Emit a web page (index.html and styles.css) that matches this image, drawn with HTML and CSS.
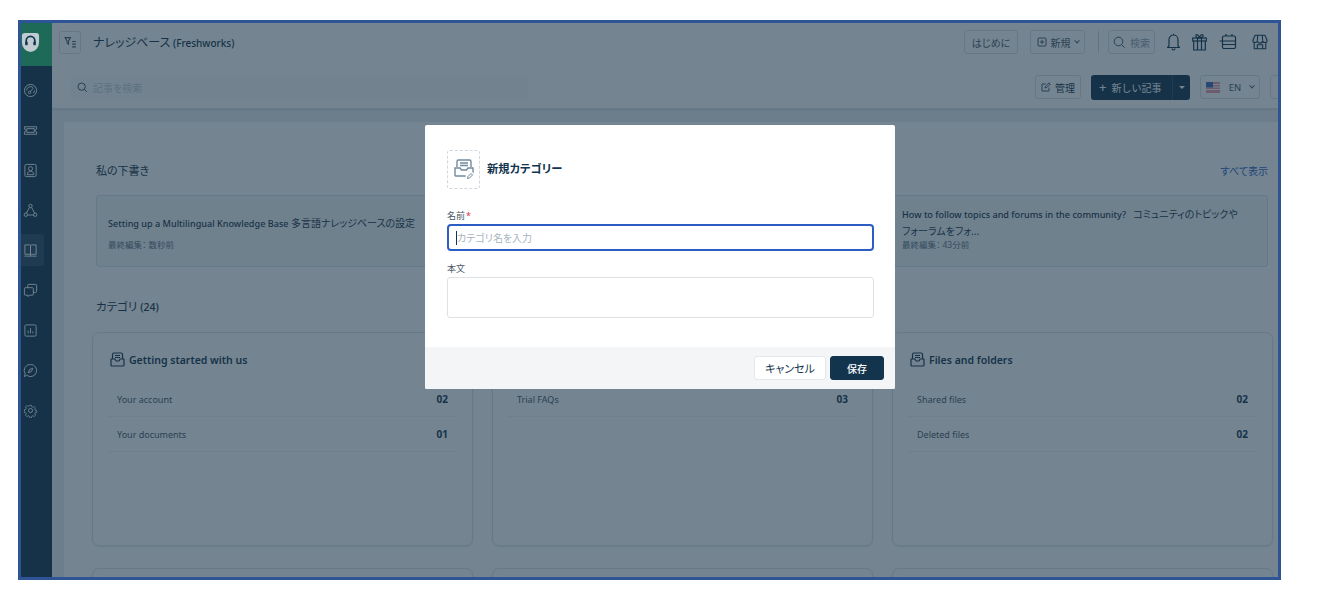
FILE: index.html
```html
<!DOCTYPE html>
<html lang="ja">
<head>
<meta charset="utf-8">
<title>ナレッジベース</title>
<link rel="stylesheet" href="styles.css">
</head>
<body>
<div class="frame">
  <div class="app">
    <nav class="sidebar">
      <div class="logo">
        <svg class="logo-mark" width="19" height="21" viewBox="0 0 20 22"><path d="M4 1h12a3 3 0 0 1 3 3v7a10 10 0 0 1-9 10A10 10 0 0 1 1 11V4a3 3 0 0 1 3-3z" fill="#bfcbd1"/><path d="M5.500 13V9a4.500 4.500 0 0 1 9 0v4" fill="none" stroke="#12344d" stroke-width="1.800"/><rect x="4.500" y="10" width="2.500" height="4" rx="1" fill="#12344d"/><rect x="13" y="10" width="2.500" height="4" rx="1" fill="#12344d"/></svg>
      </div>
      <div class="nav-list">
        <div class="nav-item"><svg class="nav-icon" viewBox="0 0 16 16"><circle cx="8" cy="8" r="6.500"/><path d="M3.800 8a4.200 4.200 0 0 1 7-3.100M12.200 8a4.200 4.200 0 0 1-1 2.700"/><circle cx="7" cy="10" r="1.300"/><path d="M8 9l3-3.500"/></svg></div>
        <div class="nav-item"><svg class="nav-icon" viewBox="0 0 16 16"><path d="M1.500 4h13v2.500a1.500 1.500 0 0 0 0 3V12h-13V9.500a1.500 1.500 0 0 0 0-3z"/><path d="M4 6h8v4H4z"/></svg></div>
        <div class="nav-item"><svg class="nav-icon" viewBox="0 0 16 16"><rect x="2" y="1.500" width="12" height="13" rx="1.500"/><circle cx="8" cy="6" r="2.200"/><path d="M4.500 12.500c0-2.500 1.500-3.500 3.500-3.500s3.500 1 3.500 3.500z"/></svg></div>
        <div class="nav-item"><svg class="nav-icon" viewBox="0 0 16 16"><circle cx="8" cy="3.200" r="1.800"/><circle cx="3" cy="12.500" r="1.800"/><circle cx="13" cy="12.500" r="1.800"/><path d="M6.800 4.800L3.600 10.800M9.200 4.800l3.200 6M4.800 12.800h6.400"/></svg></div>
        <div class="nav-item nav-active"><svg class="nav-icon" viewBox="0 0 16 16"><path d="M2 2h5a1 1 0 0 1 1 1v9H2zM14 2H9a1 1 0 0 0-1 1v9h6z"/><path d="M1.500 14h13M8 12v2"/></svg></div>
        <div class="nav-item"><svg class="nav-icon" viewBox="0 0 16 16"><path d="M5 5V2.500a1 1 0 0 1 1-1h7.500a1 1 0 0 1 1 1V9a1 1 0 0 1-1 1H11"/><path d="M2.500 5H10a1 1 0 0 1 1 1v6a1 1 0 0 1-1 1H7l-1.500 1.500V13h-3a1 1 0 0 1-1-1V6a1 1 0 0 1 1-1z"/></svg></div>
        <div class="nav-item"><svg class="nav-icon" viewBox="0 0 16 16"><rect x="2" y="2" width="12" height="12" rx="1.500"/><path d="M5.500 11V8M8 11V5.500M10.500 11V9"/></svg></div>
        <div class="nav-item"><svg class="nav-icon" viewBox="0 0 16 16"><path d="M8 1.500a6.500 6.500 0 1 1-4 11.600L1.500 14.500l.8-3A6.500 6.500 0 0 1 8 1.500z"/><path d="M5.500 10.500l1.500-3.500 3.500-1.500-1.500 3.500z"/></svg></div>
        <div class="nav-item"><svg class="nav-icon" viewBox="0 0 16 16"><circle cx="8" cy="8" r="2.200"/><path d="M6.800 1.500h2.400l.4 1.900 1.300.6 1.700-1 1.700 1.700-1 1.700.5 1.300 1.900.4v2.400l-1.900.4-.5 1.300 1 1.700-1.700 1.700-1.700-1-1.300.5-.4 1.900H6.800l-.4-1.900-1.300-.5-1.700 1-1.700-1.700 1-1.700-.5-1.300-1.900-.4V6.900l1.900-.4.5-1.300-1-1.700 1.700-1.700 1.700 1 1.300-.6z" transform="translate(1.200 1.200) scale(.85)"/></svg></div>
      </div>
    </nav>
    <div class="main">
      <header class="topbar">
        <button class="btn icon-btn"><svg width="13" height="13" viewBox="0 0 12 12" class="line"><path d="M1 1.500h5L4.200 4.500v3L2.800 6.500v-2zM7.500 5H11M7.500 7.500H11M7.500 10H11"/></svg></button>
        <h1 class="page-title"><span class="jp">ナレッジベース</span> (Freshworks)</h1>
        <div class="top-actions">
          <button class="btn btn-top btn-start">はじめに</button>
          <button class="btn btn-top btn-new"><svg width="10" height="10" viewBox="0 0 10 10" class="line"><rect x="1" y="1" width="8" height="8" rx="1"/><path d="M5 3v4M3 5h4"/></svg>新規<span class="chev"></span></button>
          <span class="divider"></span>
          <button class="btn btn-top btn-search"><svg width="13" height="13" viewBox="0 0 13 13" class="line"><circle cx="5.500" cy="5.500" r="4.300"/><path d="M8.700 8.700l3 3"/></svg><span>検索</span></button>
          <svg class="tool" width="13" height="18" viewBox="0 0 13 18"><path d="M2 13V6.500a4.500 4.500 0 0 1 9 0V13l1.500 1.500H.5zM5 15.500a1.500 1.500 0 0 0 3 0M6.500 2V.8"/></svg>
          <svg class="tool" width="15" height="18" viewBox="0 0 15 18"><rect x=".7" y="5" width="13.600" height="3"/><path d="M1.700 8v9h11.600V8M5.500 5v12M9.500 5v12M7.500 5C4.500 5 3.500 3.500 4 2.200S7 2 7.500 5c.5-3 2.900-4 3.500-2.800S10.500 5 7.500 5z"/></svg>
          <svg class="tool" width="18" height="18" viewBox="0 0 18 18"><path d="M5 3h10a1.500 1.500 0 0 1 1.500 1.500V8H3.500V4.500A1.500 1.500 0 0 1 5 3zM7 1v2M13 1v2M3.500 8h13v6a1.500 1.500 0 0 1-1.500 1.500H5A1.500 1.500 0 0 1 3.500 14zM3.500 11.500h13M.5 8h3"/></svg>
          <svg class="tool tool-last" width="16" height="18" viewBox="0 0 18 18"><path d="M3.500 1.500h11L17 7a2.500 2.500 0 0 1-5 .3 3 3 0 0 1-6 0A2.500 2.500 0 0 1 1 7zM2.500 9v7.500h13V9M6 16.500V12h6v4.500M6.500 1.500L6 7M11.500 1.500L12 7"/></svg>
        </div>
      </header>
      <div class="toolbar">
        <div class="search-box"><svg width="11" height="11" viewBox="0 0 13 13" class="line dark"><circle cx="5.500" cy="5.500" r="4.300"/><path d="M8.700 8.700l3 3"/></svg><span>記事を検索</span></div>
        <div class="tool-actions">
          <button class="btn btn-manage"><svg width="10" height="10" viewBox="0 0 10 10" class="line"><path d="M8 5.500V9H1V2h3.500M4 6l.5-1.800L8 .8 9.300 2 5.800 5.500z"/></svg>管理</button>
          <div class="split">
            <button class="split-main"><span class="plus">+</span>新しい記事</button>
            <button class="split-drop"><span class="caret"></span></button>
          </div>
          <button class="btn btn-lang"><svg width="14" height="11" viewBox="0 0 14 11"><rect width="14" height="11" fill="#ef9aa8"/><path d="M0 2.500h14M0 5h14M0 7.500h14" stroke="#fff"/><rect width="7" height="5.500" fill="#3f68b8"/></svg><span>EN</span><span class="chev"></span></button>
          <button class="btn btn-cut"></button>
        </div>
      </div>
      <div class="gutter-row">
        <div class="panel">
          <section class="drafts">
            <div class="section-head">
              <h2 class="section-title">私の下書き</h2>
              <a class="view-all">すべて表示</a>
            </div>
            <div class="draft-grid">
              <article class="draft">
                <p class="draft-title">Setting up a Multilingual Knowledge Base <span class="jp">多言語ナレッジベースの設定</span></p>
                <p class="draft-meta">最終編集： 数秒前</p>
              </article>
              <article class="draft"></article>
              <article class="draft draft-tall">
                <p class="draft-title">How to follow topics and forums in the community? &nbsp; <span class="jp">コミュニティのトピックや<br>フォーラムをフォ...</span></p>
                <p class="draft-meta">最終編集： 43分前</p>
              </article>
            </div>
          </section>
          <h2 class="section-title cat-title"><span class="jp">カテゴリ</span> <b>(24)</b></h2>
          <div class="cat-grid">
            <article class="card">
              <h3 class="card-title"><svg width="15" height="15" viewBox="0 0 15 15" class="line dark tray"><path d="M2.500 7V2.500A1.500 1.500 0 0 1 4 1h7a1.500 1.500 0 0 1 1.500 1.500V7M1 7h4l1 2h3l1-2h4v6a1 1 0 0 1-1 1H2a1 1 0 0 1-1-1zM5 3.500h5M5 5.500h5"/></svg>Getting started with us</h3>
              <div class="row"><span>Your account</span><b>02</b></div>
              <div class="row"><span>Your documents</span><b>01</b></div>
            </article>
            <article class="card">
              <h3 class="card-title"></h3>
              <div class="row"><span>Trial FAQs</span><b>03</b></div>
            </article>
            <article class="card">
              <h3 class="card-title"><svg width="15" height="15" viewBox="0 0 15 15" class="line dark tray"><path d="M2.500 7V2.500A1.500 1.500 0 0 1 4 1h7a1.500 1.500 0 0 1 1.500 1.500V7M1 7h4l1 2h3l1-2h4v6a1 1 0 0 1-1 1H2a1 1 0 0 1-1-1zM5 3.500h5M5 5.500h5"/></svg>Files and folders</h3>
              <div class="row"><span>Shared files</span><b>02</b></div>
              <div class="row"><span>Deleted files</span><b>02</b></div>
            </article>
            <article class="card"></article>
            <article class="card"></article>
            <article class="card"></article>
          </div>
        </div>
      </div>
    </div>
  </div>
  <div class="overlay">
    <form class="modal">
      <div class="modal-body">
        <div class="modal-head">
          <div class="cat-icon">
            <svg width="22" height="23" viewBox="0 0 22 23"><path d="M4 9V3.500A1.500 1.500 0 0 1 5.500 2h11A1.500 1.500 0 0 1 18 3.500V9M2 10h5l1.500 2h5l1.500-2h5v7a1 1 0 0 1-1 1H3a1 1 0 0 1-1-1zM7 5h8M7 7.500h8" fill="none" stroke="#708a9e" stroke-width="1.400"/><circle cx="17" cy="18" r="4.500" fill="#fff"/><path d="M14.500 20.500l.5-2 3-3 1.500 1.500-3 3z" fill="none" stroke="#708a9e"/></svg>
          </div>
          <h2 class="modal-title">新規カテゴリー</h2>
        </div>
        <label class="field-label">名前<span class="req">*</span></label>
        <div class="input input-focus"><span class="cursor"></span><span class="placeholder">カテゴリ名を入力</span></div>
        <label class="field-label second">本文</label>
        <div class="textarea"></div>
      </div>
      <div class="modal-foot">
        <button type="button" class="btn-cancel">キャンセル</button>
        <button type="button" class="btn-save">保存</button>
      </div>
    </form>
  </div>
</div>
</body>
</html>
```
FILE: styles.css
```css
* { box-sizing: border-box; }
html, body { margin: 0; height: 100%; background: #fff; overflow: hidden; }
body {
  padding: 20px 0 0 18px;
  font-family: "Noto Sans", "Noto Sans CJK JP", sans-serif;
  font-size: 12px;
  color: #12344d;
}
button { font-family: inherit; cursor: pointer; }
h1, h2, h3, p { margin: 0; font-weight: 400; }
.jp, .modal, .page-title, .section-title, .btn, .split, .search-box, .draft-meta, .view-all { font-feature-settings: "palt"; }

.frame {
  position: relative;
  width: 1263px;
  height: 560px;
  border: 3px solid #2f5496;
  overflow: hidden;
}
.app { display: flex; height: 100%; }

.sidebar { width: 31px; flex: none; background: #12344d; }
.logo {
  height: 43px;
  background: #26be73;
  display: flex;
  align-items: center;
  justify-content: center;
  padding: 0 13px 5px 0;
}
.logo-mark { position: relative; z-index: 2; flex: none; }
.nav-list { display: flex; flex-direction: column; padding-top: 4px; }
.nav-item { height: 40px; display: flex; align-items: center; justify-content: center; padding-right: 13px; }
.nav-active { margin: 4px 8px 4px 0; height: 32px; padding-right: 5px; background: #2a4a64; border-radius: 0 2px 2px 0; }
.nav-icon { width: 15px; height: 15px; fill: none; stroke: #fff; stroke-width: 1; flex: none; }

.main { flex: 1; min-width: 0; display: flex; flex-direction: column; background: #ebeff3; }
.line { fill: none; stroke: #475867; stroke-width: 1; flex: none; }
.line.dark { stroke: #12344d; }
.line.tray { stroke-width: 1.200; }

.topbar {
  height: 43px;
  flex: none;
  display: flex;
  align-items: center;
  padding: 0 10px 5px 7px;
  background: #fff;
}
.btn {
  height: 24px;
  border: 1px solid #dde2e7;
  border-radius: 3px;
  background: #fff;
  color: #12344d;
  font-size: 10px;
  padding: 0;
  display: inline-flex;
  align-items: center;
  justify-content: center;
}
.icon-btn { width: 22px; height: 23px; }
.page-title { margin-left: 12px; font-size: 10px; font-weight: 500; color: #12344d; white-space: nowrap; }
.page-title .jp { font-weight: 400; font-size: 12px; }
.top-actions { margin-left: auto; display: flex; align-items: center; }
.btn-top { color: #475867; }
.btn-start { width: 54px; margin-right: 12px; }
.btn-new { width: 55px; gap: 4px; }
.chev { width: 4px; height: 4px; border-right: 1px solid #475867; border-bottom: 1px solid #475867; transform: rotate(45deg) translate(-1px,-1px); }
.divider { width: 1px; height: 22px; background: #cfd7df; margin: 0 9px 0 13px; }
.btn-search { width: 47px; gap: 4px; }
.btn-search span { color: #92a2b1; }
.tool { fill: none; stroke: #12344d; stroke-width: 1.200; flex: none; margin-left: 12px; }
.tool-last { margin-left: 15px; }

.toolbar {
  height: 43px;
  flex: none;
  display: flex;
  align-items: center;
  padding: 0 0 0 19px;
  background: #fff;
  border-bottom: 1px solid #dfe4e9;
  box-shadow: 0 1px 2px rgba(18,52,77,.1);
  position: relative;
}
.search-box {
  width: 457px;
  height: 23px;
  background: #fbfcfd;
  border-radius: 3px;
  display: flex;
  align-items: center;
  gap: 5px;
  padding-left: 6px;
  font-size: 10px;
  color: #c4cdd5;
}
.tool-actions { margin-left: auto; display: flex; align-items: center; }
.btn-manage { width: 46px; gap: 4px; margin-right: 10px; }
.split { display: flex; height: 25px; width: 99px; margin-right: 10px; border-radius: 3px; overflow: hidden; }
.split-main {
  flex: 1; border: 0; background: #12344d; color: #fff; font-size: 10px;
  display: flex; align-items: center; justify-content: flex-start; gap: 5px; padding: 0 0 0 8px;
}
.plus { font-size: 13px; line-height: 1; }
.split-drop { width: 18px; border: 0; border-left: 1px solid #2a4c66; background: #12344d; padding: 0; display: flex; align-items: center; justify-content: center; }
.caret { border: 3px solid transparent; border-top-color: #fff; border-bottom: 0; }
.btn-lang { width: 60px; gap: 9px; margin-right: 10px; color: #475867; font-size: 9.500px; }
.btn-lang svg { flex: none; }
.btn-cut { width: 30px; margin-right: -22px; }

.gutter-row { flex: 1; min-height: 0; padding: 13px 0 0 12px; }
.panel { height: 100%; background: #fff; padding: 0 5px 0 28px; }

.drafts { padding: 38px 5px 0 4px; }
.section-head { display: flex; justify-content: space-between; align-items: center; height: 20px; margin-bottom: 15px; }
.section-title { font-size: 11px; color: #183247; }
.view-all { font-size: 10px; color: #2c5cc5; }
.draft-grid { display: grid; grid-template-columns: 384px 1fr 378px; column-gap: 10px; }
.draft {
  height: 72px;
  background: #f5f8fb;
  border: 1px solid #dbe3ea;
  border-radius: 3px;
  padding: 0 11px 15px;
  display: flex;
  flex-direction: column;
  justify-content: flex-end;
}
.draft-title { font-size: 9.100px; line-height: 16px; font-weight: 500; color: #183247; }
.draft-title .jp { font-weight: 400; font-size: 10px; }
.draft-meta { font-size: 8.500px; color: #5d7080; margin-top: 7px; line-height: 12px; }
.draft-tall .draft-title { margin-bottom: -1px; }
.draft-tall .draft-meta { margin-top: 0; }
.cat-title { margin: 30px 0 0 4px; height: 20px; line-height: 20px; }
.cat-title .jp { font-size: 11.500px; }
.cat-title b { font-weight: 500; font-size: 10.500px; }

.cat-grid { display: grid; grid-template-columns: repeat(3, 381px); column-gap: 19px; row-gap: 22px; margin-top: 15px; }
.card {
  height: 214px;
  background: #fff;
  border: 1px solid #dfe4e9;
  border-radius: 7px;
  padding: 0 15px;
  box-shadow: 0 1px 2px rgba(18,52,77,.08);
}
.card-title {
  height: 49px;
  display: flex;
  align-items: center;
  gap: 4px;
  padding: 4px 0 0 2px;
  font-size: 10.500px;
  font-weight: 600;
  color: #12344d;
}
.row {
  height: 35px;
  display: flex;
  align-items: center;
  justify-content: space-between;
  padding: 0 9px;
  border-bottom: 1px solid #f3f5f7;
  font-size: 9px;
  color: #475867;
}
.row b { font-weight: 700; font-size: 10px; color: #12344d; }

.overlay {
  position: absolute;
  inset: 0;
  z-index: 1;
  background: rgba(23, 50, 70, .6);
  padding: 102px 0 0 404px;
}
.modal {
  width: 470px;
  height: 264px;
  background: #fff;
  border-radius: 2px;
  display: flex;
  flex-direction: column;
  overflow: hidden;
}
.modal-body { flex: 1; padding: 25px 21px 0 22px; }
.modal-head { display: flex; align-items: center; gap: 1px; height: 39px; margin-bottom: 21px; }
.cat-icon {
  width: 33px; height: 39px;
  border: 1px dashed #cfd7df;
  border-radius: 3px;
  display: flex; align-items: center; justify-content: center;
  margin-right: 6px;
}
.modal-title { font-size: 11.300px; font-weight: 700; color: #12344d; margin-bottom: 3px; }
.field-label { display: block; font-size: 9px; line-height: 12px; color: #475867; margin-bottom: 2px; }
.field-label.second { margin-top: 12px; margin-bottom: 2px; }
.req { color: #e43538; margin-left: 1px; }
.input {
  height: 27px;
  border: 2px solid #2c5cc5;
  border-radius: 4px;
  display: flex;
  align-items: center;
  padding-left: 7px;
  font-size: 10px;
}
.cursor { width: 1px; height: 14px; background: #12344d; }
.placeholder { color: #a8b4bf; }
.textarea { height: 41px; border: 1px solid #dde2e7; border-radius: 3px; }
.modal-foot {
  height: 42px;
  flex: none;
  background: #f3f5f7;
  display: flex;
  justify-content: flex-end;
  align-items: center;
  gap: 4px;
  padding-right: 11px;
}
.btn-cancel, .btn-save { height: 24px; border-radius: 3px; font-size: 11px; padding: 0; font-feature-settings: "palt"; }
.btn-cancel { width: 72px; background: #fff; border: 1px solid #e3e7ec; color: #12344d; }
.btn-save { width: 54px; background: #12344d; border: 1px solid #12344d; color: #fff; font-size: 10px; font-weight: 500; }
```
